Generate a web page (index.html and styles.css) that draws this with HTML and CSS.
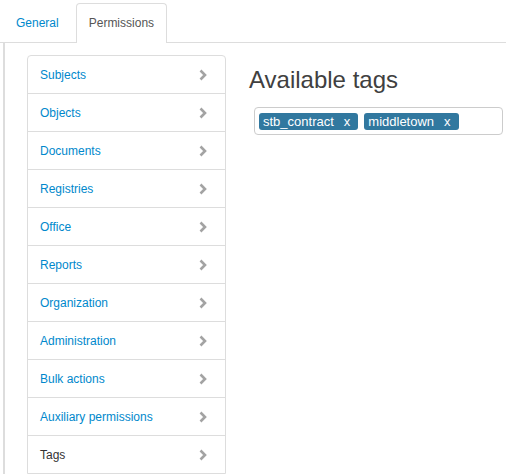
FILE: index.html
```html
<!DOCTYPE html>
<html lang="en">
<head>
    <meta charset="UTF-8">
    <meta name="viewport" content="width=device-width, initial-scale=1.0">
    <title>Permissions</title>
    <link rel="stylesheet" href="styles.css">
</head>
<body>
    <ul class="tabs">
        <li class="tab"><a href="#">General</a></li>
        <li class="tab active"><a href="#">Permissions</a></li>
    </ul>
    <div class="tab-pane">
        <div class="menu">
            <a class="menu-item" href="#">Subjects<svg class="chevron" viewBox="0 0 8 12"><polyline points="1.5,1.5 6,6 1.5,10.5"/></svg></a>
            <a class="menu-item" href="#">Objects<svg class="chevron" viewBox="0 0 8 12"><polyline points="1.5,1.5 6,6 1.5,10.5"/></svg></a>
            <a class="menu-item" href="#">Documents<svg class="chevron" viewBox="0 0 8 12"><polyline points="1.5,1.5 6,6 1.5,10.5"/></svg></a>
            <a class="menu-item" href="#">Registries<svg class="chevron" viewBox="0 0 8 12"><polyline points="1.5,1.5 6,6 1.5,10.5"/></svg></a>
            <a class="menu-item" href="#">Office<svg class="chevron" viewBox="0 0 8 12"><polyline points="1.5,1.5 6,6 1.5,10.5"/></svg></a>
            <a class="menu-item" href="#">Reports<svg class="chevron" viewBox="0 0 8 12"><polyline points="1.5,1.5 6,6 1.5,10.5"/></svg></a>
            <a class="menu-item" href="#">Organization<svg class="chevron" viewBox="0 0 8 12"><polyline points="1.5,1.5 6,6 1.5,10.5"/></svg></a>
            <a class="menu-item" href="#">Administration<svg class="chevron" viewBox="0 0 8 12"><polyline points="1.5,1.5 6,6 1.5,10.5"/></svg></a>
            <a class="menu-item" href="#">Bulk actions<svg class="chevron" viewBox="0 0 8 12"><polyline points="1.5,1.5 6,6 1.5,10.5"/></svg></a>
            <a class="menu-item" href="#">Auxiliary permissions<svg class="chevron" viewBox="0 0 8 12"><polyline points="1.5,1.5 6,6 1.5,10.5"/></svg></a>
            <a class="menu-item current" href="#">Tags<svg class="chevron" viewBox="0 0 8 12"><polyline points="1.5,1.5 6,6 1.5,10.5"/></svg></a>
        </div>
        <div class="panel">
            <h2>Available tags</h2>
            <div class="tag-input">
                <span class="tag">stb_contract<span class="remove">x</span></span>
                <span class="tag">middletown<span class="remove">x</span></span>
            </div>
        </div>
    </div>
</body>
</html>
```

FILE: styles.css
```css
body {
    margin: 0;
    font-family: "Liberation Sans", Arial, sans-serif;
    font-size: 12px;
    line-height: 16px;
    color: #333;
    background: #fff;
    overflow: hidden;
}
a {
    color: #0088cc;
    text-decoration: none;
}
.tabs {
    list-style: none;
    margin: 0;
    padding: 3px 0 0 3px;
    display: flex;
    gap: 4px;
    border-bottom: 1px solid #ddd;
    height: 43px;
    box-sizing: border-box;
}
.tab a {
    display: block;
    padding: 11px 12px;
    border: 1px solid transparent;
    border-bottom: none;
    border-radius: 4px 4px 0 0;
}
.tab.active a {
    color: #555;
    background: #fff;
    border-color: #ddd;
    padding-bottom: 12px;
}
.tab-pane {
    margin-left: 3px;
    border-left: 2px solid #ddd;
    padding: 12px 0 0 22px;
    display: flex;
    gap: 23px;
}
.menu {
    width: 199px;
    flex-shrink: 0;
    border: 1px solid #ddd;
    border-radius: 4px 4px 0 0;
    box-sizing: border-box;
}
.menu-item {
    display: flex;
    align-items: center;
    justify-content: space-between;
    box-sizing: border-box;
    height: 38px;
    padding: 0 18px 0 12px;
    border-top: 1px solid #ddd;
}
.menu-item:first-child {
    border-top: none;
    height: 37px;
}
.menu-item.current {
    color: #333;
}
.chevron {
    width: 8px;
    height: 12px;
    fill: none;
    stroke: #a3a3a3;
    stroke-width: 2.6;
}
.panel {
    flex: 1;
    padding-top: 12px;
}
h2 {
    margin: 0;
    font-size: 24px;
    line-height: 26px;
    font-weight: normal;
    color: #404040;
}
.tag-input {
    margin: 14px 3px 0 5px;
    height: 28px;
    box-sizing: border-box;
    border: 1px solid #ccc;
    border-radius: 4px;
    padding: 5px 4px;
    display: flex;
    gap: 6px;
}
.tag {
    background: #31789f;
    color: #fff;
    border-radius: 3px;
    height: 17px;
    line-height: 17px;
    padding: 0 8px 0 4px;
    font-size: 13px;
}
.remove {
    margin-left: 10px;
}
```
